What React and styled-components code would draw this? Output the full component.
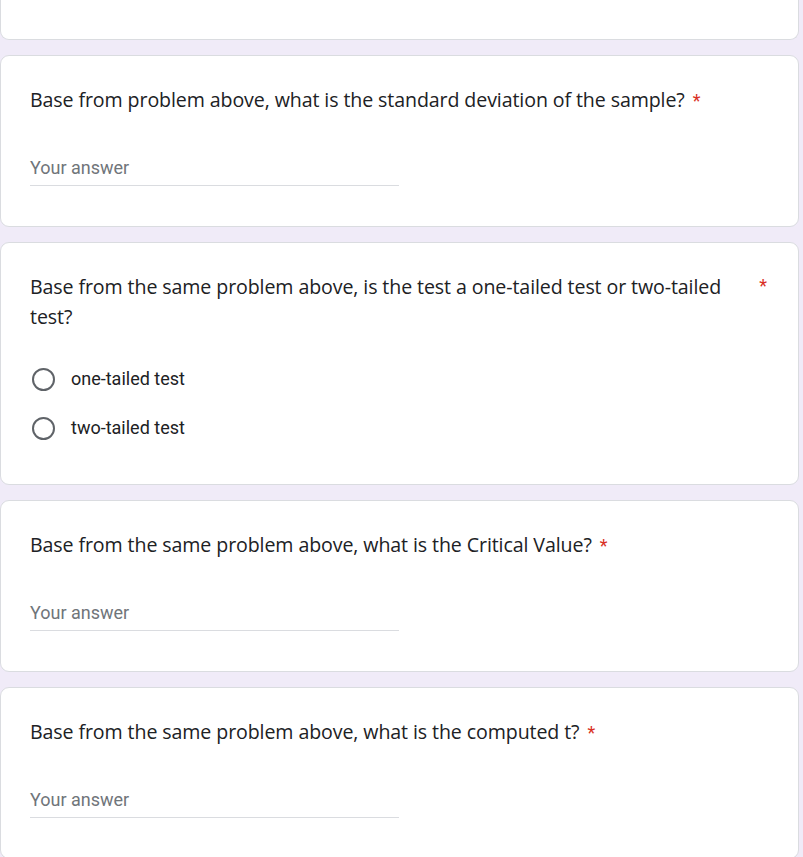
import React from "react";
import styled, { createGlobalStyle } from "styled-components";

const GlobalStyle = createGlobalStyle`
  html, body {
    margin: 0;
    padding: 0;
    background: #f0ebf8;
  }
  body {
    font-family: Roboto, "Liberation Sans", sans-serif;
    color: #202124;
  }
`;

const Page = styled.div`
  display: flex;
  flex-direction: column;
  gap: 15px;
  width: 799px;
  padding-bottom: 40px;
`;

const Card = styled.div`
  background: #fff;
  border: 1px solid #dadce0;
  border-radius: 9px;
  padding: ${p => p.$pad || "29px 30px 40px 29px"};
  box-sizing: border-box;
`;

const CardTail = styled(Card)`
  height: 40px;
  border-top: none;
  border-top-left-radius: 0;
  border-top-right-radius: 0;
  padding: 0;
`;

const QuestionRow = styled.div`
  display: flex;
  justify-content: space-between;
  align-items: flex-start;
  gap: 24px;
`;

const Question = styled.div`
  font-family: "Open Sans", "Noto Sans", sans-serif;
  font-size: 19.6px;
  line-height: 30px;
  letter-spacing: -0.1px;
  color: #202124;
  max-width: ${p => (p.$wrap ? "710px" : "none")};
`;

const Star = styled.span`
  color: #d93025;
  font-family: Roboto, sans-serif;
  font-size: 18px;
  margin-left: ${p => (p.$side ? "0" : "8px")};
  margin-top: ${p => (p.$side ? "3px" : "0")};
  padding-right: ${p => (p.$side ? "1px" : "0")};
`;

const Answer = styled.div`
  margin-top: 42px;
  width: 369px;
  border-bottom: 1px solid #dadce0;
  font-size: 18px;
  line-height: 20px;
  padding-bottom: 7px;
  color: #70757a;
`;

const Options = styled.div`
  display: flex;
  flex-direction: column;
  gap: 25px;
  margin-top: 35px;
`;

const Option = styled.label`
  display: flex;
  align-items: center;
  gap: 16px;
  font-size: 18px;
  line-height: 24px;
  color: #202124;
  padding-left: 2px;
`;

const Radio = styled.span`
  width: 19px;
  height: 19px;
  border: 2px solid #5f6368;
  border-radius: 50%;
  flex-shrink: 0;
`;

function TextQuestion({ text }) {
  return (
    <Card>
      <Question>
        {text}
        <Star>*</Star>
      </Question>
      <Answer>Your answer</Answer>
    </Card>
  );
}

export default function App() {
  return (
    <>
      <GlobalStyle />
      <Page>
        <CardTail />
        <TextQuestion text="Base from problem above, what is the standard deviation of the sample?" />
        <Card $pad="29px 30px 44px 29px">
          <QuestionRow>
            <Question $wrap>
              Base from the same problem above, is the test a one-tailed test or two-tailed test?
            </Question>
            <Star $side>*</Star>
          </QuestionRow>
          <Options>
            <Option>
              <Radio />
              one-tailed test
            </Option>
            <Option>
              <Radio />
              two-tailed test
            </Option>
          </Options>
        </Card>
        <TextQuestion text="Base from the same problem above, what is the Critical Value?" />
        <TextQuestion text="Base from the same problem above, what is the computed t?" />
      </Page>
    </>
  );
}
